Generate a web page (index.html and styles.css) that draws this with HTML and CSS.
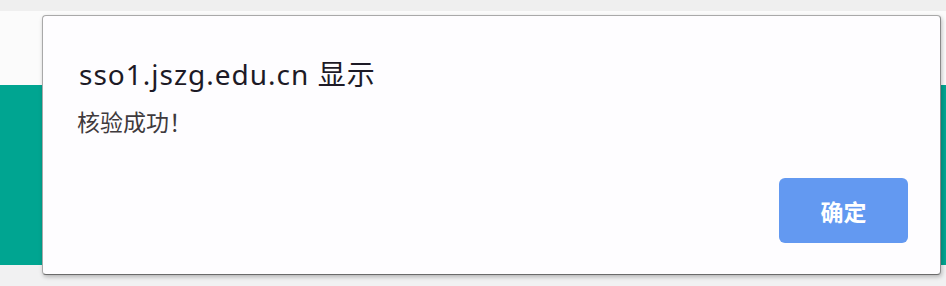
FILE: index.html
```html
<!DOCTYPE html>
<html lang="zh-CN">
<head>
    <meta charset="UTF-8">
    <meta name="viewport" content="width=device-width, initial-scale=1.0">
    <title>核验</title>
    <link rel="stylesheet" href="styles.css">
</head>
<body>
    <div class="page">
        <div class="topbar"></div>
        <div class="header"></div>
        <div class="band"></div>
        <div class="bottom"></div>
    </div>

    <div class="dialog" role="alertdialog">
        <div class="dialog-title">sso1.jszg.edu.cn 显示</div>
        <div class="dialog-message">核验成功！</div>
        <div class="dialog-actions">
            <button class="button primary">确定</button>
        </div>
    </div>
</body>
</html>
```

FILE: styles.css
```css
body {
    margin: 0;
    font-family: "Noto Sans", "Noto Sans CJK SC", sans-serif;
    background-color: #f2f2f2;
    overflow: hidden;
}

.page {
    display: flex;
    flex-direction: column;
    height: 286px;
}

.topbar {
    height: 11px;
    background-color: #efefef;
}

.header {
    height: 74px;
    background-color: #fbfbfb;
}

.band {
    height: 180px;
    background-color: #00a591;
}

.bottom {
    flex: 1;
    background-color: #f1f1f2;
}

/* alert box sits over the page */
.dialog {
    position: absolute;
    left: 42px;
    top: 15px;
    width: 899px;
    height: 260px;
    box-sizing: border-box;
    padding: 40px 32px 31px 36px;
    background-color: #fefdff;
    border: 1px solid #a9a9a9;
    border-bottom-color: #6b6b6b;
    border-right-color: #8a8a8a;
    border-radius: 4px;
    box-shadow: 1px 2px 4px rgba(0, 0, 0, 0.25);
    display: flex;
    flex-direction: column;
}

.dialog-title {
    font-size: 28px;
    line-height: 36px;
    letter-spacing: 1px;
    color: #1d1a26;
}

.dialog-message {
    margin-top: 14px;
    margin-left: -2px;
    font-size: 23px;
    line-height: 32px;
    color: #3f3a3d;
}

.dialog-actions {
    margin-top: auto;
    display: flex;
    justify-content: flex-end;
}

.button {
    width: 129px;
    height: 65px;
    border: none;
    border-radius: 6px;
    font-family: "Noto Sans CJK SC", sans-serif;
    font-size: 23px;
    font-weight: bold;
    cursor: pointer;
}

.button.primary {
    background-color: #6399f1;
    color: #ffffff;
}
```
